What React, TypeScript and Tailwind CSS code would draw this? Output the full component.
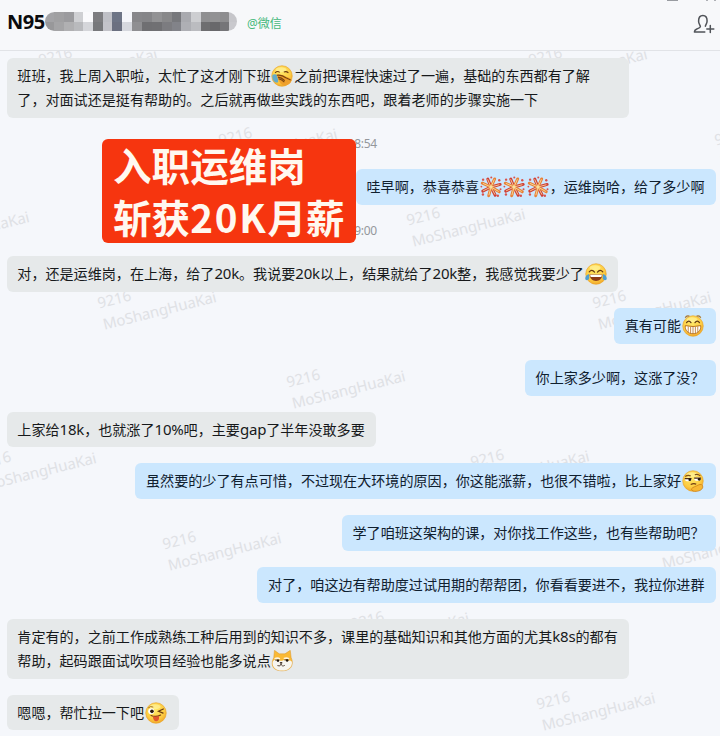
import React from "react";
import clsx from "clsx";

type EmojiName = "facepalm" | "firework" | "joy" | "grin" | "doubt" | "doge" | "wink";
type Part = string | { emoji: EmojiName };

interface Message {
  from: "them" | "me";
  lines: Part[][];
  time?: string;
}

const e = (emoji: EmojiName): Part => ({ emoji });

const MESSAGES: Message[] = [
  {
    from: "them",
    lines: [
      ["班班，我上周入职啦，太忙了这才刚下班", e("facepalm"), "之前把课程快速过了一遍，基础的东西都有了解"],
      ["了，对面试还是挺有帮助的。之后就再做些实践的东西吧，跟着老师的步骤实施一下"],
    ],
  },
  {
    from: "me",
    time: "18:54",
    lines: [["哇早啊，恭喜恭喜", e("firework"), e("firework"), e("firework"), "，运维岗哈，给了多少啊"]],
  },
  {
    from: "them",
    time: "19:00",
    lines: [["对，还是运维岗，在上海，给了20k。我说要20k以上，结果就给了20k整，我感觉我要少了", e("joy")]],
  },
  { from: "me", lines: [["真有可能", e("grin")]] },
  { from: "me", lines: [["你上家多少啊，这涨了没？"]] },
  { from: "them", lines: [["上家给18k，也就涨了10%吧，主要gap了半年没敢多要"]] },
  {
    from: "me",
    lines: [["虽然要的少了有点可惜，不过现在大环境的原因，你这能涨薪，也很不错啦，比上家好", e("doubt")]],
  },
  { from: "me", lines: [["学了咱班这架构的课，对你找工作这些，也有些帮助吧？"]] },
  { from: "me", lines: [["对了，咱这边有帮助度过试用期的帮帮团，你看看要进不，我拉你进群"]] },
  {
    from: "them",
    lines: [
      ["肯定有的，之前工作成熟练工种后用到的知识不多，课里的基础知识和其他方面的尤其k8s的都有"],
      ["帮助，起码跟面试吹项目经验也能多说点", e("doge")],
    ],
  },
  { from: "them", lines: [["嗯嗯，帮忙拉一下吧", e("wink")]] },
];

// left / top of each watermark block inside the chat area
const WATERMARKS = [
  [42, -6], [532, -6], [222, 74], [718, 74], [-86, 157], [410, 154], [101, 237], [596, 237],
  [290, 316], [-19, 398], [474, 396], [166, 478], [660, 476], [354, 558], [540, 638],
];

// [width, upper colour, lower colour]
const MOSAIC: [number, string, string][] = [
  [9, "#a3a3a6", "#98989a"], [10, "#a0a0a2", "#a4a4a6"], [10, "#9b9b9e", "#b0b0b2"],
  [9, "#cfd0d3", "#b9babd"], [10, "#fafafc", "#d5d6da"], [10, "#7d7d80", "#77787b"],
  [9, "#bfc0c6", "#c3c3c9"], [10, "#6d7485", "#6b7080"], [10, "#f5f6fa", "#d6d8de"],
  [10, "#87878a", "#8f8f92"], [10, "#858588", "#6f6f72"], [10, "#929294", "#707073"],
  [10, "#88888a", "#7c7c80"], [9, "#77787c", "#828389"], [10, "#a9aaaf", "#aeafb4"],
  [10, "#cdced1", "#bbbcc0"], [9, "#8f8f91", "#6e6e70"], [10, "#929294", "#68686b"],
  [9, "#8d8d8f", "#757578"], [8, "#c6c6ca", "#c9c9cd"],
];

const Ball = () => (
  <>
    <circle cx="12" cy="12" r="11.2" fill="url(#ball)" stroke="#e9a528" strokeWidth="0.7" />
    <ellipse cx="11" cy="5.2" rx="6" ry="2.7" fill="#fff6a8" opacity="0.6" />
  </>
);

const drawings: Record<EmojiName, React.ReactNode> = {
  facepalm: (
    <>
      <Ball />
      <path d="M4.500 8.500Q7 6 9.500 8M14 7.800q2.500-1.600 5 .8" stroke="#6b3c12" strokeWidth="1.200" fill="none" />
      <path d="M1.600 10.800c1.800-1.200 4-.8 5.400.6l1 7.200c-1.600 1.200-4 .4-5.200-1.400-1.200-1.800-1.800-4.400-1.200-6.400z" fill="#62abc9" />
      <path d="M6 10.600c3.600-.8 7.200-.2 10.400 2.200 3.400 1.200 5.800 2 6.200 4-1 3.400-4.400 5.600-7.600 5.400-4.800-.2-6.400-4.400-9-11.600z" fill="#efa02c" />
      <path d="M6.400 11.200c3.600-.6 6.600.2 9.800 2.700 2.200 1 3.800 1.300 5.200 2.700M8.200 15c2.600.2 4.200 1.600 6.400 3.800M7.600 13.200c3 .2 5 1.400 7.400 3.800" stroke="#7a430f" strokeWidth="1.200" fill="none" />
    </>
  ),
  firework: (
    <>
      {/* sparks */}
      <g fill="#d8524b">
        <circle cx="3.400" cy="4" r="1.300" />
        <circle cx="12.300" cy="1.700" r="1.100" />
        <circle cx="21" cy="4.600" r="1.300" />
        <circle cx="22.400" cy="14.500" r="1.100" />
        <circle cx="19.500" cy="21.500" r="1.300" />
        <circle cx="3.200" cy="20.200" r="1.300" />
        <circle cx="1.500" cy="11.500" r="1" />
      </g>
      {/* petals */}
      <g fill="none" strokeLinecap="round">
        <path d="M12 12 8.500 3.400M12 12l10-2.800M12 12l4.600 9M12 12 3 16.500" stroke="#cf3e35" strokeWidth="3.200" />
        <path d="M12 12l4-8.800M12 12l9 5.300M12 12l-2.500 9.500M12 12 2.500 7.800" stroke="#e88036" strokeWidth="3.200" />
        <path d="M12 12 8.500 4M12 12l8.800-2.400M12 12l4.200 8M12 12l-8.200 4M12 12l3.500-8M12 12l8 4.700M12 12l-2.200 8.500M12 12 3.500 8.200" stroke="#fae5a5" strokeWidth="0.900" />
      </g>
    </>
  ),
  joy: (
    <>
      <Ball />
      <path d="M4.600 9.700Q7.500 6.400 10.400 9.900M13.600 9.900Q16.500 6.400 19.400 9.700" stroke="#673a15" strokeWidth="1.400" fill="none" strokeLinecap="round" />
      <path d="M5 12.600h14c-.2 4.300-3.200 7-7 7s-6.800-2.700-7-7z" fill="#8c3b17" />
      <path d="M5.500 12.900h13l-.7 2.300H6.200z" fill="#fff" />
      <path d="M4.200 12C1.400 13-.4 15.800.5 18c1.500 1.600 4.400.4 4.200-2.200zM19.800 12c2.800 1 4.600 3.800 3.700 6-1.500 1.600-4.400.4-4.200-2.200z" fill="#4f9fd0" />
    </>
  ),
  grin: (
    <>
      <Ball />
      <path d="M3.500 3q1.500-3 4.500-1.800M16 1.200q3-1.200 4.500 1.800" stroke="#a9762c" strokeWidth="1.300" fill="none" />
      <path d="M5 8.400Q7.400 4.900 9.800 8.400M14.200 8.400Q16.600 4.900 19 8.400" stroke="#5f3714" strokeWidth="1.300" fill="none" strokeLinecap="round" />
      <path d="M3.600 11.600q8.400 2 16.800 0c.6 5-2.900 8.800-8.400 8.800s-9-3.800-8.400-8.800z" fill="#fff" stroke="#b56b1a" strokeWidth="1" />
      <path d="M6.800 12.600v6M9.400 12.900v7.200M12 13v7.200M14.600 12.900v7.200M17.200 12.600v6" stroke="#ba742a" strokeWidth="0.900" />
    </>
  ),
  doubt: (
    <>
      <Ball />
      <path d="M3.500 7q3-2.200 6-.4M14 5.200q3-1.400 6 1.200" stroke="#80501a" strokeWidth="1.300" fill="none" />
      <ellipse cx="6.700" cy="10.300" rx="3.500" ry="2" fill="#fff" />
      <ellipse cx="17" cy="9.800" rx="3.500" ry="2" fill="#fff" />
      <path d="M3 9.400h7.400M13.300 8.900h7.500" stroke="#4e2e12" strokeWidth="1.200" />
      <circle cx="8.500" cy="10.600" r="1.500" fill="#221509" />
      <circle cx="18.800" cy="10.100" r="1.500" fill="#221509" />
      <path d="M9.500 15.800q3.500-1.800 6-.3" stroke="#713c12" strokeWidth="1.300" fill="none" />
      <path d="M10.500 20.400c1.500-2 4.500-2.400 7.200-4 2.600-1.400 5.300-.4 5 2.200-.4 3.200-4.800 5-8.800 4.700-2-.2-3.900-1.200-3.400-2.900z" fill="#f8b733" stroke="#c97b15" strokeWidth="0.800" />
    </>
  ),
  doge: (
    <>
      <path d="M3 8.500 3.800.4 9 4.200h6.200L21 .4l1 8.100c2 4 1.600 9-1.600 11.800-4 3.200-12.800 3.200-16.800 0C.4 17.100 1 12 3 8.500z" fill="#fab934" stroke="#dc9b32" strokeWidth="0.600" />
      <path d="M1.800 13c1.600-3.300 6.400-3.300 8.200-1.200l2-.2c2-.8 4-1 5.400.7 1.800-1.400 4.200-1 5.400.4.800 5.600-4 9.700-10.800 9.700S1.200 18.600 1.800 13z" fill="#f7f5ef" />
      <path d="M4 9.800q3-1.800 5.600 0M14 9.600q3-1.600 5.600.2" stroke="#fff5dc" strokeWidth="2" fill="none" />
      <path d="M4.500 11h4.700M14.500 10.800h4.700" stroke="#4a3217" strokeWidth="1" />
      <circle cx="7.600" cy="11.600" r="1.300" fill="#20150d" />
      <circle cx="17.600" cy="11.400" r="1.300" fill="#20150d" />
      <ellipse cx="11" cy="14" rx="1.500" ry="1" fill="#37271c" />
      <path d="M7 17q3 1.700 4-1.700.8 3.200 4 1.500" stroke="#4b392c" strokeWidth="1" fill="none" />
    </>
  ),
  wink: (
    <>
      <Ball />
      <path d="M3.500 6.400q2.500-2.400 5.500-.8" stroke="#9a6420" strokeWidth="1" fill="none" />
      <circle cx="6.800" cy="10" r="3.300" fill="#fff" />
      <circle cx="7.600" cy="10.200" r="2" fill="#2a190d" />
      <path d="m20 7.600-5.300 2.500 5 2" stroke="#69380f" strokeWidth="1.300" fill="none" strokeLinecap="round" />
      <path d="M6.600 14.800q5.400 2.200 10.400-.6" stroke="#7a3b11" strokeWidth="1.300" fill="none" strokeLinecap="round" />
      <path d="M8.600 15.500c2.400.6 4.600.4 6.600-.3.700 3.200-.4 5.600-2.800 5.800-2.400.1-3.700-2.500-3.800-5.500z" fill="#e0562f" />
    </>
  ),
};

const Emoji: React.FC<{ name: EmojiName }> = ({ name }) => (
  <svg viewBox="0 0 24 24" className="mx-[0.75px] inline-block h-[22px] w-[22px] align-[-6px]">
    {drawings[name]}
  </svg>
);

// Latin runs are set a touch larger than the Chinese text around them
const Text: React.FC<{ value: string }> = ({ value }) => (
  <>
    {value.split(/([a-z0-9%]+)/).map((run, i) =>
      i % 2 ? (
        <span key={i} className="text-[15px] leading-none tracking-[-0.200px]">
          {run}
        </span>
      ) : (
        run
      )
    )}
  </>
);

const Bubble: React.FC<{ message: Message }> = ({ message }) => {
  const { from, lines } = message;
  return (
    <div
      className={clsx(
        "relative w-fit whitespace-nowrap rounded-[6px] py-[6px] pr-[11px] text-[14.090px] leading-[23.900px]",
        from === "me"
          ? "self-end bg-[#cbe7fe] pl-[10.700px] text-[#10202f]"
          : "self-start bg-[#e6e9ea] pl-[10.300px] text-[#17191b]",
        lines.length > 1 && "min-w-[622px]"
      )}
    >
      {lines.map((line, i) => (
        <div key={i} className="h-[23.900px]">
          {line.map((part, j) =>
            typeof part === "string" ? <Text key={j} value={part} /> : <Emoji key={j} name={part.emoji} />
          )}
        </div>
      ))}
    </div>
  );
};

const Header = () => (
  <header className="flex h-[51px] items-center overflow-hidden border-b border-[#e1e3e7] bg-[#f7f8fa] pl-[7px] pr-[5px]">
    <span className="-mt-[6px] w-[38px] text-[20px] font-bold tracking-[-0.500px] text-[#0c0c0e]">N95</span>
    <div className="-mt-[7px] flex h-[19px] w-[192px] overflow-hidden rounded-full">
      {MOSAIC.map(([width, upper, lower], i) => (
        <div key={i} className="flex shrink-0 flex-col" style={{ width }}>
          <div className="h-[10px]" style={{ background: upper }} />
          <div className="h-[9px]" style={{ background: lower }} />
        </div>
      ))}
    </div>
    <span className="-mt-[2px] ml-[10px] text-[12px] text-[#45b97c]">@微信</span>
    <svg
      viewBox="0 0 22 22"
      className="-mt-[2px] ml-auto h-[22px] w-[22px]"
      fill="none"
      stroke="#505358"
      strokeWidth="1.500"
      strokeLinecap="round"
      strokeLinejoin="round"
    >
      <path d="M11.800 19H1.400c0-1.400.9-2.300 2.400-3 2-.9 3.600-1.400 3.600-2.600 0-1-1.800-2.400-1.800-5.200 0-3.200 1.500-5.600 4.300-5.600s4.200 2.300 4.200 5.400c0 2.700-1.700 3.600-1.700 5.300" />
      <path d="M17.300 12.600v7M13.800 16.100h7" />
    </svg>
    {/* lower edge of the window buttons */}
    <div className="absolute left-[667px] top-0 h-[1px] w-[11px] bg-[#999ca1]" />
    <div className="absolute left-[706px] top-0 flex gap-[6px]">
      <i className="h-[1px] w-[2px] bg-[#aeb0b5]" />
      <i className="h-[1px] w-[2px] bg-[#aeb0b5]" />
    </div>
  </header>
);

const App: React.FC = () => {
  return (
    <div className="relative h-[736px] w-[720px] overflow-hidden bg-[#f5f7fb] font-['Noto_Sans','Noto_Sans_CJK_SC',sans-serif]">
      <svg className="absolute h-0 w-0">
        <defs>
          <radialGradient id="ball" cx="0.45" cy="0.35" r="0.7">
            <stop offset="0" stopColor="#ffe867" />
            <stop offset="0.65" stopColor="#fdcc42" />
            <stop offset="1" stopColor="#ee9f25" />
          </radialGradient>
        </defs>
      </svg>

      <Header />

      <main className="relative h-[685px] overflow-hidden pl-[7px] pr-[4.500px] pt-[7px]">
        {/* Watermarks */}
        {WATERMARKS.map(([left, top]) => (
          <div
            key={`${left}-${top}`}
            className="absolute origin-top-left rotate-[-14deg] text-[15px] leading-[22px] tracking-[-0.100px] text-[#dfe1e5]"
            style={{ left: left - 6, top: top + 4 }}
          >
            <div>9216</div>
            <div>MoShangHuaKai</div>
          </div>
        ))}

        {/* Messages */}
        <div className="flex flex-col gap-[15.950px]">
          {MESSAGES.map((message, i) => (
            <React.Fragment key={i}>
              {message.time && (
                <div className="relative h-[19.300px] pl-[2px] text-center text-[12px] leading-[19px] tracking-[-0.300px] text-[#94979c]">
                  {message.time}
                </div>
              )}
              <Bubble message={message} />
            </React.Fragment>
          ))}
        </div>
      </main>

      {/* Headline card over the chat */}
      <div className="absolute left-[102px] top-[139px] h-[104px] w-[254px] whitespace-nowrap rounded-[6px] bg-[#f6350f] pl-[11px] font-['Noto_Sans_CJK_SC',sans-serif] text-[38.600px] font-bold leading-[52px] text-[#fff8f0]">
        <div className="-mt-[1px]">入职运维岗</div>
        <div>
          斩获<span className="tracking-[1.800px]">20K</span>月薪
        </div>
      </div>
    </div>
  );
};

export default App;
